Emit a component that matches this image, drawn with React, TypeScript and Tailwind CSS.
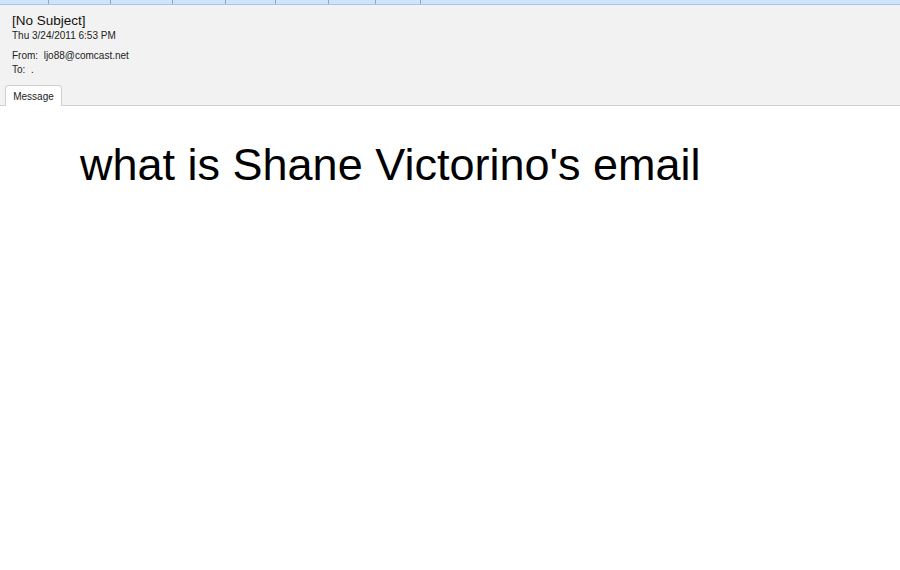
import React from 'react';

const tabs = [49, 62, 62, 53, 50, 53, 47, 45];

export default function App() {
  return (
    <div className="w-[900px] h-[570px] bg-white flex flex-col font-['Liberation_Sans',Arial,sans-serif] text-black overflow-hidden">
      {/* toolbar strip */}
      <div className="h-[5px] bg-[#cfe3fb] border-b border-[#a9c6ea] flex">
        {tabs.map((w, i) => (
          <div key={i} style={{ width: w }} className="h-full border-r border-[#8fa6c4]" />
        ))}
      </div>

      {/* header */}
      <div className="bg-[#f2f2f2] border-b border-[#d0d0d0] flex flex-col">
        <div className="pl-[12px] pt-[8px]">
          <div className="text-[13.5px] leading-[16px] text-[#111]">[No Subject]</div>
          <div className="text-[10px] leading-[13px] text-[#222]">Thu 3/24/2011 6:53 PM</div>
          <div className="mt-[7px] text-[10px] leading-[14px] text-[#222]">From:&nbsp; ljo88@comcast.net</div>
          <div className="text-[10px] leading-[14px] text-[#222]">To:&nbsp; .</div>
        </div>
        <div className="flex pl-[5px] mt-[8px] -mb-px">
          <div className="w-[57px] h-[21px] bg-white border border-b-0 border-[#d0d0d0] rounded-t-[4px] flex items-center justify-center text-[10px] text-[#222]">
            Message
          </div>
        </div>
      </div>

      {/* body */}
      <div className="flex-1 pl-[80px] pt-[33px]">
        <div className="text-[45px] leading-[52px] text-black">what is Shane Victorino's email</div>
      </div>
    </div>
  );
}
